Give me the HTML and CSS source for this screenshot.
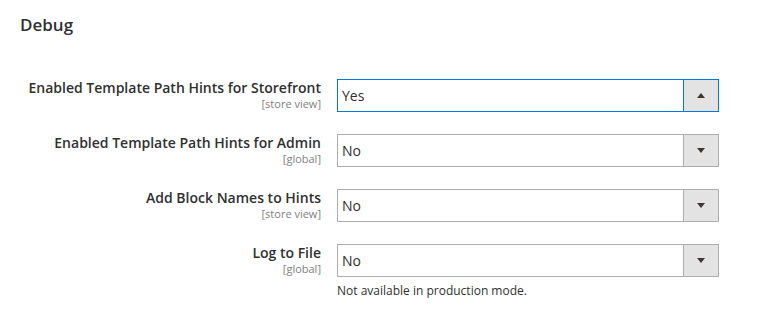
FILE: index.html
```html
<!DOCTYPE html>
<html lang="en">
<head>
    <meta charset="UTF-8">
    <title>Debug</title>
    <link rel="stylesheet" href="styles.css">
</head>
<body>
    <div class="section">
        <h2 class="title">Debug</h2>
        <div class="fields">
            <div class="row">
                <div class="label">
                    <span class="name">Enabled Template Path Hints for Storefront</span>
                    <span class="scope">[store view]</span>
                </div>
                <div class="control">
                    <div class="select focused">
                        <span class="value">Yes</span>
                        <span class="arrow"><span class="tri up"></span></span>
                    </div>
                </div>
            </div>
            <div class="row">
                <div class="label">
                    <span class="name">Enabled Template Path Hints for Admin</span>
                    <span class="scope">[global]</span>
                </div>
                <div class="control">
                    <div class="select">
                        <span class="value">No</span>
                        <span class="arrow"><span class="tri"></span></span>
                    </div>
                </div>
            </div>
            <div class="row">
                <div class="label">
                    <span class="name">Add Block Names to Hints</span>
                    <span class="scope">[store view]</span>
                </div>
                <div class="control">
                    <div class="select">
                        <span class="value">No</span>
                        <span class="arrow"><span class="tri"></span></span>
                    </div>
                </div>
            </div>
            <div class="row">
                <div class="label">
                    <span class="name">Log to File</span>
                    <span class="scope">[global]</span>
                </div>
                <div class="control">
                    <div class="select">
                        <span class="value">No</span>
                        <span class="arrow"><span class="tri"></span></span>
                    </div>
                    <p class="note">Not available in production mode.</p>
                </div>
            </div>
        </div>
    </div>
</body>
</html>
```

FILE: styles.css
```css
body {
    margin: 0;
    padding: 0;
    background-color: #fff;
    font-family: 'Open Sans', 'Noto Sans', sans-serif;
    color: #303030;
}

.section {
    padding: 0 20px;
}

.title {
    margin: 13px 0 0;
    font-size: 17px;
    line-height: 24px;
    font-weight: 600;
    color: #303030;
}

.fields {
    display: flex;
    flex-direction: column;
    gap: 22px;
    margin-top: 42px;
}

.row {
    display: grid;
    grid-template-columns: 301px 382px;
    column-gap: 16px;
}

.label {
    display: flex;
    flex-direction: column;
    align-items: flex-end;
    text-align: right;
}

.name {
    font-size: 14px;
    line-height: 18px;
    font-weight: 600;
    color: #303030;
}

.scope {
    font-size: 11px;
    line-height: 13px;
    color: #808080;
}

.select {
    display: flex;
    height: 33px;
    box-sizing: border-box;
    border: 1px solid #adadad;
    background-color: #fff;
}

.select.focused {
    border-color: #007bdb;
}

.value {
    flex: 1;
    padding-left: 4px;
    font-size: 14px;
    line-height: 31px;
    color: #303030;
}

.arrow {
    width: 34px;
    display: flex;
    align-items: center;
    justify-content: center;
    background-color: #e3e3e3;
    border-left: 1px solid #adadad;
}

.focused .arrow {
    border-left-color: #007bdb;
}

.tri {
    width: 0;
    height: 0;
    border-left: 4px solid transparent;
    border-right: 4px solid transparent;
    border-top: 5px solid #41362f;
}

.tri.up {
    border-top: 0;
    border-bottom: 5px solid #41362f;
}

.note {
    margin: 6px 0 0;
    font-size: 12px;
    line-height: 16px;
    color: #303030;
}
```
